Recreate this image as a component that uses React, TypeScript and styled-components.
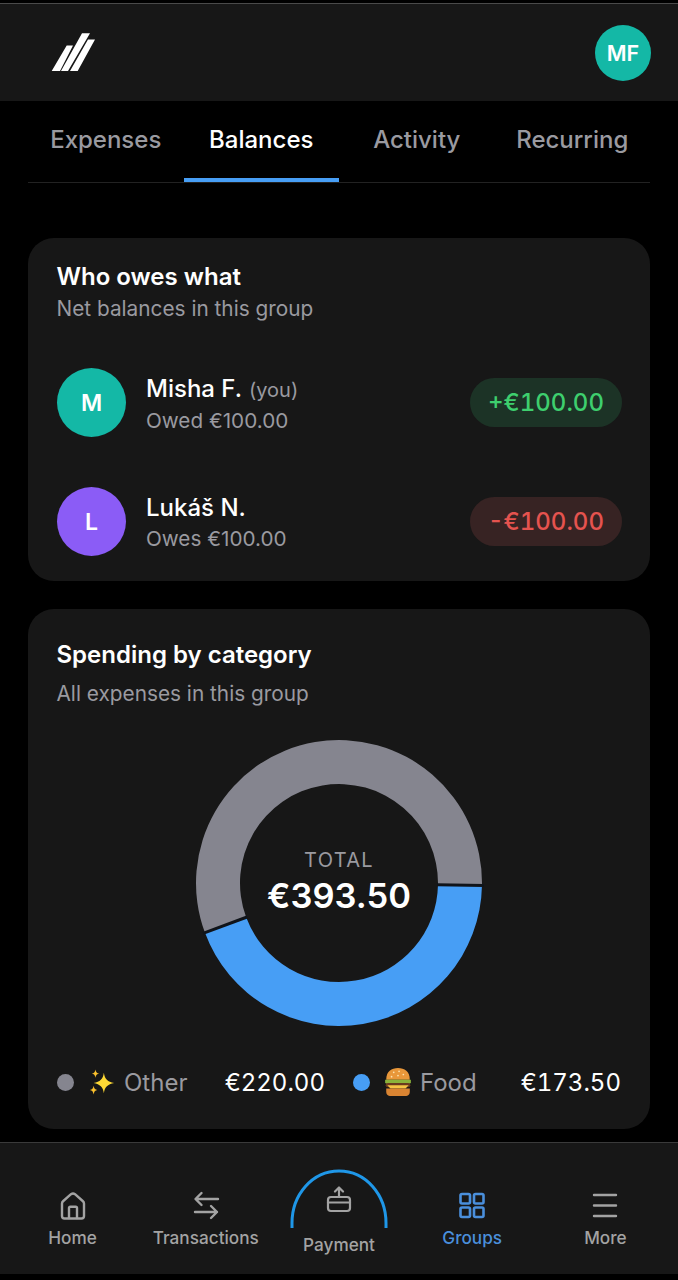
import React from 'react';
import styled, { createGlobalStyle } from 'styled-components';

const FONT = `Inter, "Noto Sans", sans-serif`;
const PANEL = '#171717';
const MUTED = '#9a9aa0';
const BLUE = '#479ef5';
const TEAL = '#14b8a6';

const GlobalStyle = createGlobalStyle`
  html, body { margin: 0; padding: 0; background: #000; }
  body { font-family: ${FONT}; color: #fff; }
  * { box-sizing: border-box; }
`;

const Page = styled.div`
  width: 678px;
  height: 1280px;
  overflow: hidden;
  display: flex;
  flex-direction: column;
  background: #000;
  padding-top: 3px;
`;
const Header = styled.header`
  height: 98px;
  flex: none;
  background: ${PANEL};
  border-top: 1px solid #4a4a4a;
  display: flex;
  align-items: center;
  justify-content: space-between;
  padding: 0 27px 0 50px;
`;
const Avatar = styled.div<{ $bg: string; $size: number; $fs: number }>`
  width: ${(p) => p.$size}px;
  height: ${(p) => p.$size}px;
  flex: none;
  border-radius: 50%;
  background: ${(p) => p.$bg};
  display: flex;
  align-items: center;
  justify-content: center;
  font-size: ${(p) => p.$fs}px;
  font-weight: 600;
`;
const Tabs = styled.nav`
  height: 82px;
  flex: none;
  margin: 0 28px;
  display: grid;
  grid-template-columns: repeat(4, 1fr);
  border-bottom: 1px solid #222;
`;
const Tab = styled.div<{ $active?: boolean }>`
  display: flex;
  align-items: center;
  justify-content: center;
  font-size: 24px;
  font-weight: 500;
  color: ${(p) => (p.$active ? '#fff' : MUTED)};
  border-bottom: 4px solid ${(p) => (p.$active ? BLUE : 'transparent')};
`;
const Content = styled.main`
  flex: 1;
  display: flex;
  flex-direction: column;
  gap: 28px;
  padding: 55px 28px 0;
`;
const Card = styled.section<{ $height: number; $top: number }>`
  height: ${(p) => p.$height}px;
  background: ${PANEL};
  border-radius: 26px;
  padding: ${(p) => p.$top}px 28px 0 29px;
  display: flex;
  flex-direction: column;
`;
const CardTitle = styled.h2`
  margin: 0 0 0 -0.5px;
  font-size: 24px;
  line-height: 29px;
  font-weight: 600;
`;
const CardSub = styled.p<{ $gap: number }>`
  margin: ${(p) => p.$gap}px 0 0 -0.5px;
  font-size: 20.8px;
  line-height: 26px;
  color: ${MUTED};
`;
const People = styled.div`
  display: flex;
  flex-direction: column;
  gap: 50px;
  margin-top: 46px;
`;
const Person = styled.div`
  display: flex;
  align-items: center;
  gap: 20px;
`;
const PersonInfo = styled.div`
  flex: 1;
  display: flex;
  flex-direction: column;
  gap: 3px;
  padding-top: 2px;
`;
const Name = styled.div`
  font-size: 24px;
  line-height: 30px;
  font-weight: 500;
`;
const You = styled.span`
  font-size: 20px;
  font-weight: 400;
  color: ${MUTED};
  margin-left: 7px;
`;
const Owed = styled.div`
  font-size: 20.7px;
  line-height: 26px;
  color: ${MUTED};
`;
const Pill = styled.div<{ $fg: string; $bg: string }>`
  height: 49px;
  width: 152px;
  border-radius: 25px;
  background: ${(p) => p.$bg};
  color: ${(p) => p.$fg};
  font-size: 24px;
  font-weight: 500;
  font-variant-numeric: tabular-nums;
  display: flex;
  align-items: center;
  justify-content: center;
`;
const DonutWrap = styled.div`
  position: relative;
  width: 290px;
  height: 290px;
  margin: 31px 0 0 137px;
  display: flex;
  flex-direction: column;
  align-items: center;
  justify-content: center;
`;
const DonutSvg = styled.svg`
  position: absolute;
  inset: 0;
`;
const TotalLabel = styled.div`
  position: relative;
  font-size: 20px;
  line-height: 24px;
  letter-spacing: 1.3px;
  margin-bottom: 2px;
  color: ${MUTED};
`;
const TotalValue = styled.div`
  position: relative;
  font-size: 34.5px;
  line-height: 44px;
  font-weight: 600;
`;
const Legend = styled.div`
  display: flex;
  align-items: center;
  justify-content: space-between;
  margin: 39px 1px 0 0;
`;
const LegendItem = styled.div<{ $width: number }>`
  width: ${(p) => p.$width}px;
  display: flex;
  align-items: center;
`;
const Dot = styled.span<{ $color: string }>`
  width: 17px;
  height: 17px;
  border-radius: 50%;
  flex: none;
  background: ${(p) => p.$color};
  margin-right: 14px;
`;
const LegendName = styled.span`
  flex: 1;
  font-size: 24px;
  color: ${MUTED};
  margin-left: 8px;
`;
const LegendValue = styled.span`
  font-size: 24px;
  font-variant-numeric: tabular-nums;
`;
const BottomNav = styled.footer`
  height: 132px;
  flex: none;
  margin-bottom: 6px;
  background: ${PANEL};
  border-top: 1px solid #3a3a3a;
  display: grid;
  grid-template-columns: repeat(5, 1fr);
  padding: 0 6px;
`;
const NavItem = styled.div<{ $active?: boolean; $top?: number }>`
  position: relative;
  display: flex;
  flex-direction: column;
  align-items: center;
  padding-top: ${(p) => p.$top ?? 48}px;
  color: ${(p) => (p.$active ? '#4a8fdc' : '#a3a3a3')};
`;
const NavLabel = styled.span<{ $top?: number }>`
  margin-top: ${(p) => p.$top ?? 5}px;
  font-size: 17.2px;
  line-height: 24px;
  font-weight: 500;
  white-space: nowrap;
`;
const Arc = styled.svg`
  position: absolute;
  top: 26px;
  left: 50%;
  margin-left: -49px;
`;

const polar = (r: number, deg: number) => {
  const a = ((deg - 90) * Math.PI) / 180;
  return [145 + r * Math.cos(a), 145 + r * Math.sin(a)];
};
const segment = (from: number, to: number) => {
  const [x1, y1] = polar(143, from);
  const [x2, y2] = polar(143, to);
  const [x3, y3] = polar(99, to);
  const [x4, y4] = polar(99, from);
  const large = to - from > 180 ? 1 : 0;
  return `M${x1} ${y1}A143 143 0 ${large} 1 ${x2} ${y2}L${x3} ${y3}A99 99 0 ${large} 0 ${x4} ${y4}Z`;
};

function Logo() {
  return (
    <svg width="46" height="42" viewBox="0 0 46 42">
      <path d="M1.700 39 H10 L23 13.500 H16.700Z M11 39 H18 L40 1.200 H32Z M20 39 H27.700 L45 7.500 H38Z" fill="#fff" />
    </svg>
  );
}

function Sparkles() {
  return (
    <svg width="28" height="28" viewBox="0 0 30 28">
      <path d="M17 4 C18 11 21 13.5 28 15 C21 16.5 18 19 17 26 C16 19 13 16.5 6 15 C13 13.5 16 11 17 4Z" fill="#fdd835" />
      <path d="M8 0.5 C8.5 3.5 9.500 4.500 12 5 C9.500 5.500 8.500 6.500 8 9.500 C7.500 6.500 6.500 5.500 4 5 C6.500 4.500 7.500 3.500 8 0.500Z" fill="#fbc02d" />
      <path d="M6 18 C6.500 21 7.500 22 10 22.500 C7.500 23 6.500 24 6 27.500 C5.500 24 4.500 23 2 22.500 C4.500 22 5.500 21 6 18Z" fill="#fbc02d" />
    </svg>
  );
}

function Burger() {
  return (
    <svg width="28" height="30" viewBox="0 0 26 28">
      <path d="M2 12 C2 4 7 1 13 1 C19 1 24 4 24 12Z" fill="#e8973a" />
      <path d="M1 12 H25 V15 Q22 17 19 15 Q16 17 13 15 Q10 17 7 15 Q4 17 1 15Z" fill="#8bb33a" />
      <rect x="1.500" y="15" width="23" height="4" rx="2" fill="#6b3a1e" />
      <path d="M3 17 H23 L20 20 H6Z" fill="#f6c445" />
      <path d="M2 20 H24 V23 C24 26 22 27 20 27 H6 C4 27 2 26 2 23Z" fill="#d98432" />
      <circle cx="9" cy="5" r="0.800" fill="#fbe3b0" />
      <circle cx="14" cy="4" r="0.800" fill="#fbe3b0" />
      <circle cx="18" cy="7" r="0.800" fill="#fbe3b0" />
      <circle cx="7" cy="9" r="0.800" fill="#fbe3b0" />
      <circle cx="13" cy="8" r="0.800" fill="#fbe3b0" />
    </svg>
  );
}

const iconProps = {
  fill: 'none',
  stroke: 'currentColor',
  strokeWidth: 2.4,
  strokeLinecap: 'round' as const,
  strokeLinejoin: 'round' as const,
};

function HomeIcon() {
  return (
    <svg width="30" height="30" viewBox="0 0 30 30" {...iconProps}>
      <path d="M4 25 V12.500 C4 11.500 4.500 10.700 5.300 10 L13 3.200 C14.200 2.300 15.800 2.300 17 3.200 L24.700 10 C25.500 10.700 26 11.500 26 12.500 V25 C26 26.500 25 27.500 23.500 27.500 H6.500 C5 27.500 4 26.500 4 25Z" />
      <path d="M11 27 V17 C11 16.200 11.500 15.700 12.300 15.700 H17.700 C18.500 15.700 19 16.200 19 17 V27" />
    </svg>
  );
}

function SwapIcon() {
  return (
    <svg width="30" height="30" viewBox="0 0 30 30" {...iconProps}>
      <path d="M27 8 H5 M10.500 2 L4.500 8 L10.500 14" />
      <path d="M4 21 H26 M20 15 L26 21 L20 27" />
    </svg>
  );
}

function GridIcon() {
  return (
    <svg width="30" height="30" viewBox="0 0 30 30" {...iconProps} strokeWidth={2.6}>
      <rect x="3.500" y="3" width="9.500" height="9.500" rx="1.500" />
      <rect x="17" y="3" width="9.500" height="9.500" rx="1.500" />
      <rect x="3.500" y="16.500" width="9.500" height="9.500" rx="1.500" />
      <rect x="17" y="16.500" width="9.500" height="9.500" rx="1.500" />
    </svg>
  );
}

function MenuIcon() {
  return (
    <svg width="30" height="30" viewBox="0 0 30 30" {...iconProps}>
      <path d="M4 4 H26 M4 14.500 H26 M4 25 H26" />
    </svg>
  );
}

function PayIcon() {
  return (
    <svg width="26" height="28" viewBox="0 0 26 28" {...iconProps} strokeWidth={2.2}>
      <rect x="2" y="11" width="22" height="14" rx="3" />
      <path d="M2 16.500 H24" />
      <path d="M13 11 V2 M9 5.500 L13 1.500 L17 5.500" />
    </svg>
  );
}

export default function App() {
  return (
    <Page>
      <GlobalStyle />
      <Header>
        <Logo />
        <Avatar $bg={TEAL} $size={56} $fs={21.5}>MF</Avatar>
      </Header>
      <Tabs>
        <Tab>Expenses</Tab>
        <Tab $active>Balances</Tab>
        <Tab>Activity</Tab>
        <Tab>Recurring</Tab>
      </Tabs>
      <Content>
        <Card $height={343} $top={24}>
          <CardTitle>Who owes what</CardTitle>
          <CardSub $gap={5}>Net balances in this group</CardSub>
          <People>
            <Person>
              <Avatar $bg={TEAL} $size={69} $fs={23}>M</Avatar>
              <PersonInfo>
                <Name>Misha F.<You>(you)</You></Name>
                <Owed>Owed €100.00</Owed>
              </PersonInfo>
              <Pill $fg="#3ecf6e" $bg="#1c3326">+€100.00</Pill>
            </Person>
            <Person>
              <Avatar $bg="#8b5cf6" $size={69} $fs={23}>L</Avatar>
              <PersonInfo>
                <Name>Lukáš N.</Name>
                <Owed>Owes €100.00</Owed>
              </PersonInfo>
              <Pill $fg="#e5534f" $bg="#372323">-€100.00</Pill>
            </Person>
          </People>
        </Card>
        <Card $height={520} $top={31}>
          <CardTitle>Spending by category</CardTitle>
          <CardSub $gap={12}>All expenses in this group</CardSub>
          <DonutWrap>
            <DonutSvg width="290" height="290" viewBox="0 0 290 290">
              <path d={segment(249.7, 451)} fill="#85858f" />
              <path d={segment(91, 249.7)} fill={BLUE} />
              <path d={`M${polar(98, 91).join(' ')}L${polar(145, 91).join(' ')}`} stroke="#10141a" strokeWidth="3" />
              <path d={`M${polar(98, 249.7).join(' ')}L${polar(145, 249.7).join(' ')}`} stroke="#10141a" strokeWidth="3" />
            </DonutSvg>
            <TotalLabel>TOTAL</TotalLabel>
            <TotalValue>€393.50</TotalValue>
          </DonutWrap>
          <Legend>
            <LegendItem $width={268}>
              <Dot $color="#85858f" />
              <Sparkles />
              <LegendName>Other</LegendName>
              <LegendValue>€220.00</LegendValue>
            </LegendItem>
            <LegendItem $width={268}>
              <Dot $color={BLUE} />
              <Burger />
              <LegendName>Food</LegendName>
              <LegendValue>€173.50</LegendValue>
            </LegendItem>
          </Legend>
        </Card>
      </Content>
      <BottomNav>
        <NavItem>
          <HomeIcon />
          <NavLabel>Home</NavLabel>
        </NavItem>
        <NavItem>
          <SwapIcon />
          <NavLabel>Transactions</NavLabel>
        </NavItem>
        <NavItem $top={43}>
          <Arc width="98" height="62" viewBox="0 0 98 62" fill="none" stroke="#1f97e8" strokeWidth="3">
            <path d="M2 59 V54 C2 26 22 2 49 2 C76 2 96 26 96 54 V59" />
          </Arc>
          <PayIcon />
          <NavLabel $top={19}>Payment</NavLabel>
        </NavItem>
        <NavItem $active>
          <GridIcon />
          <NavLabel>Groups</NavLabel>
        </NavItem>
        <NavItem>
          <MenuIcon />
          <NavLabel>More</NavLabel>
        </NavItem>
      </BottomNav>
    </Page>
  );
}
